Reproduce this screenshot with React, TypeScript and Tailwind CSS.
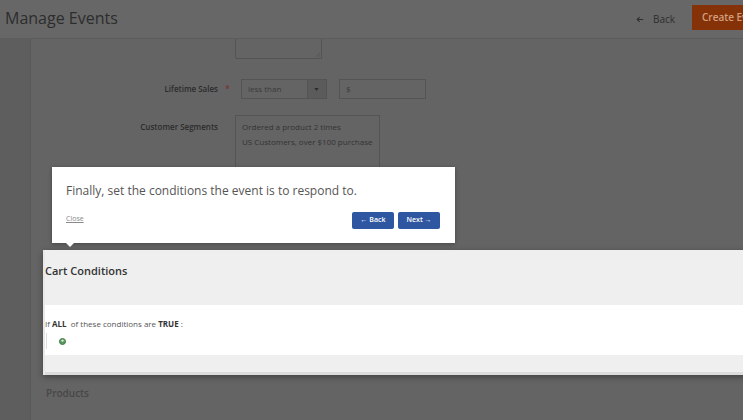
import React from 'react';

const font = { fontFamily: '"Open Sans", "Liberation Sans", sans-serif' };

const ArrowLeft: React.FC<{ className?: string }> = ({ className }) => (
    <svg viewBox="0 0 10 8" className={className} fill="none" stroke="currentColor" strokeWidth="1.3">
        <path d="M9 4H1.5M4.5 1 1.5 4l3 3" />
    </svg>
);

export default function App() {
    return (
        <div className="relative w-[743px] h-[420px] overflow-hidden bg-[#646464] text-[#2c2c2c]" style={font}>
            {/* header */}
            <div className="h-[39px] bg-[#676767] border-b border-[#5c5c5c] flex items-center pl-[5px]">
                <h1 className="text-[16px] text-[#2d2d2d] leading-none mt-[-2px]">Manage Events</h1>
                <div className="ml-auto flex items-center mr-[-29px]">
                    <button className="flex items-center gap-[9px] text-[10px] text-[#2e2e2e] mr-[17px]">
                        <ArrowLeft className="w-[8px] h-[7px]" /> Back
                    </button>
                    <button className="h-[25px] w-[80px] bg-[#863208] text-[#d2a080] text-[10px] font-semibold pl-[10px] text-left whitespace-nowrap overflow-hidden mt-[-3px]">
                        Create Event
                    </button>
                </div>
            </div>

            <div className="flex h-[381px]">
                <div className="w-[31px] shrink-0 bg-[#5e5e5e] border-r border-[#595959]" />
                <div className="flex-1 min-w-0">
                    {/* textarea bottom */}
                    <div className="ml-[204px] w-[87px] h-[20px] border-x border-b border-[#535353] rounded-b-[2px] relative">
                        <svg viewBox="0 0 6 6" className="absolute right-[1px] bottom-[1px] w-[5px] h-[5px]" stroke="#4f4f4f" strokeWidth="0.8">
                            <path d="M6 1 1 6M6 4 4 6" />
                        </svg>
                    </div>

                    {/* lifetime sales */}
                    <div className="flex items-center mt-[20px] h-[20px]">
                        <div className="w-[187px] text-right text-[8px] font-semibold">Lifetime Sales</div>
                        <span className="ml-[7px] text-[9px] text-[#7a2a2a]">*</span>
                        <div className="ml-[11px] w-[86px] h-[20px] border border-[#545454] flex">
                            <span className="flex-1 text-[8px] text-[#3a3a3a] pl-[6px] leading-[18px]">less than</span>
                            <span className="w-[19px] bg-[#5b5b5b] border-l border-[#545454] flex items-center justify-center">
                                <svg viewBox="0 0 6 4" className="w-[5px] h-[3px]" fill="#2e2e2e"><path d="M0 0h6L3 4z" /></svg>
                            </span>
                        </div>
                        <div className="ml-[12px] w-[87px] h-[20px] border border-[#545454] text-[8px] text-[#3a3a3a] pl-[6px] leading-[18px]">$</div>
                    </div>

                    {/* customer segments */}
                    <div className="flex items-start mt-[16px]">
                        <div className="w-[187px] text-right text-[8px] font-semibold pt-[6px]">Customer Segments</div>
                        <div className="ml-[17px] w-[145px] h-[110px] border border-[#545454] text-[8px] text-[#333] pl-[6px] pt-[3px] leading-[15px] whitespace-nowrap">
                            <div>Ordered a product 2 times</div>
                            <div>US Customers, over $100 purchase</div>
                        </div>
                    </div>

                    {/* cart conditions */}
                    <div className="mt-[25px] ml-[12px] w-[720px] bg-[#efefef] border-l-2 border-[#e8e8e8] shadow-[0_2px_6px_rgba(0,0,0,0.35)]">
                        <div className="h-[55px] flex items-start pt-[13px]">
                            <span className="text-[11px] font-semibold text-[#333]">Cart Conditions</span>
                        </div>
                        <div className="bg-white h-[50px] pt-[13px] text-[8px] text-[#555]">
                            <div>
                                If <b className="text-[#333]">ALL</b>&nbsp; of these conditions are <b className="text-[#333]">TRUE</b> :
                            </div>
                            <div className="flex items-center mt-[3px]">
                                <span className="ml-[1px] w-px h-[16px] bg-[#ddd]" />
                                <span className="ml-[12px] w-[7px] h-[7px] rounded-full bg-[#5a9a62] border border-[#3f7d47] flex items-center justify-center text-white text-[6px] leading-none font-bold">+</span>
                            </div>
                        </div>
                        <div className="h-[17px] bg-[#efefef]" />
                        <div className="h-[3px] bg-[#dcdcdc]" />
                    </div>

                    <div className="ml-[15px] mt-[11px] text-[10px] font-semibold text-[#474747]">Products</div>
                </div>
            </div>

            {/* tooltip */}
            <div className="absolute left-[52px] top-[167px] w-[403px] h-[76px] bg-white shadow-[0_1px_4px_rgba(0,0,0,0.3)]">
                <p className="absolute left-[14px] top-[15px] text-[12px] text-[#555]">Finally, set the conditions the event is to respond to.</p>
                <a className="absolute left-[14px] top-[47px] text-[7px] text-[#8a8a8a] underline">Close</a>
                <div className="absolute right-[15px] top-[45px] flex gap-[4px]">
                    <button className="w-[42px] h-[17px] rounded-[2px] bg-[#2f56a1] text-white text-[7px] font-semibold">← Back</button>
                    <button className="w-[42px] h-[17px] rounded-[2px] bg-[#2f56a1] text-white text-[7px] font-semibold">Next →</button>
                </div>
                <div className="absolute left-[14px] bottom-[-4px] w-0 h-0 border-x-[4px] border-x-transparent border-t-[4px] border-t-white" />
            </div>
        </div>
    );
}
